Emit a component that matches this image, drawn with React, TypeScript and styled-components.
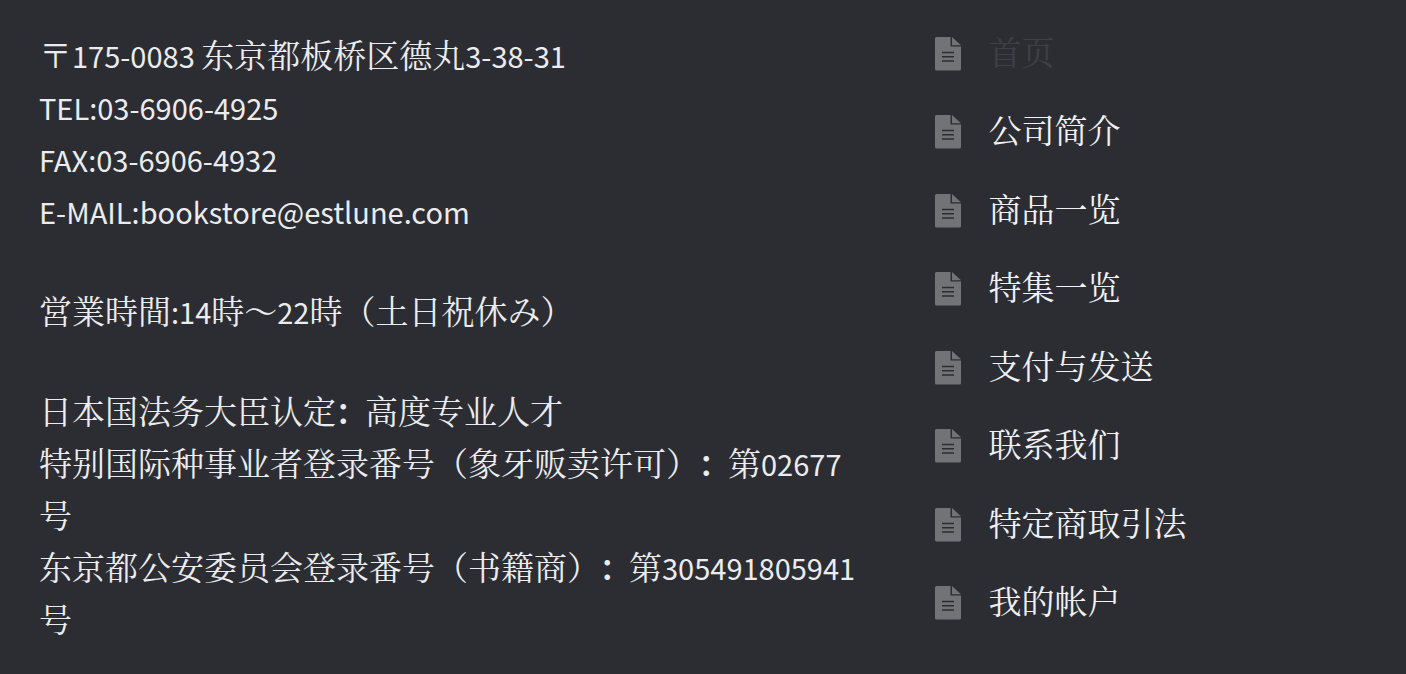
import React from "react";
import styled, { createGlobalStyle } from "styled-components";

const GlobalStyle = createGlobalStyle`
  body {
    margin: 0;
    background: #2c2d32;
  }
`;

const Footer = styled.footer`
  display: grid;
  grid-template-columns: minmax(0, 25fr) minmax(0, 13fr);
  column-gap: 64px;
  padding: 25px 39px 30px;
  color: #ebecef;
  font-family: "Noto Serif CJK SC", "Noto Sans CJK SC", sans-serif;
  font-size: 33px;
  font-weight: 400;
  line-height: 52px;
  text-spacing-trim: space-all;
`;

const Company = styled.address`
  display: flex;
  flex-direction: column;
  gap: 48px;
  padding-top: 3px;
  font-style: normal;
`;

const Paragraph = styled.p`
  margin: 0;
`;

const Latin = styled.span`
  font-family: "Noto Sans CJK SC", sans-serif;
  font-size: 29px;
  font-weight: 400;
  line-height: 1;
`;

const Colon = styled(Latin)`
  font-weight: 700;
`;

const MenuArea = styled.nav`
  display: grid;
`;

const Menu = styled.ul`
  display: flex;
  flex-direction: column;
  justify-content: space-between;
  margin: 0;
  padding: 0 0 18px;
  list-style: none;
`;

const MenuItem = styled.li`
  display: flex;
  align-items: flex-end;
  gap: 28px;
`;

const MenuLink = styled.a<{ $current?: boolean }>`
  color: ${(p) => (p.$current ? "#3e3f47" : "#f0f1f5")};
  text-decoration: none;
`;

const Icon = styled.svg`
  flex: none;
  width: 26px;
  height: 34px;
  margin-bottom: 6px;
`;

const PageIcon = () => (
  <Icon viewBox="0 0 26 34" aria-hidden="true">
    <path
      fill="#727377"
      d="M1.5 0H15.5v9.5H26v22.5a1.5 1.5 0 0 1-1.5 1.5h-23A1.5 1.5 0 0 1 0 32V1.5A1.5 1.5 0 0 1 1.5 0Z"
    />
    <path fill="#727377" d="M17 0 26 8.3H17Z" />
    <path stroke="#2c2d32" strokeWidth="1.5" d="M7 15.5h12M7 19.8h12M7 24.1h12" />
  </Icon>
);

const pages = [
  "首页",
  "公司简介",
  "商品一览",
  "特集一览",
  "支付与发送",
  "联系我们",
  "特定商取引法",
  "我的帐户",
];

export default function App() {
  return (
    <>
      <GlobalStyle />
      <Footer>
        <Company>
          <Paragraph>
            〒<Latin>175-0083 </Latin>东京都板桥区德丸<Latin>3-38-31</Latin>
            <br />
            <Latin>TEL:03-6906-4925</Latin>
            <br />
            <Latin>FAX:03-6906-4932</Latin>
            <br />
            <Latin>E-MAIL:bookstore@estlune.com</Latin>
          </Paragraph>
          <Paragraph lang="ja">
            営業時間<Latin>:14</Latin>時～<Latin>22</Latin>時（土日祝休み）
          </Paragraph>
          <Paragraph>
            日本国法务大臣认定<Colon>：</Colon>高度专业人才
            <br />
            特别国际种事业者登录番号（象牙贩卖许可）<Colon>：</Colon>第<Latin>02677</Latin>号
            <br />
            东京都公安委员会登录番号（书籍商）<Colon>：</Colon>第<Latin>305491805941</Latin>号
          </Paragraph>
        </Company>
        <MenuArea aria-label="页面">
          <Menu>
            {pages.map((page, i) => (
              <MenuItem key={page}>
                <PageIcon />
                <MenuLink href="#" $current={i === 0}>
                  {page}
                </MenuLink>
              </MenuItem>
            ))}
          </Menu>
        </MenuArea>
      </Footer>
    </>
  );
}
